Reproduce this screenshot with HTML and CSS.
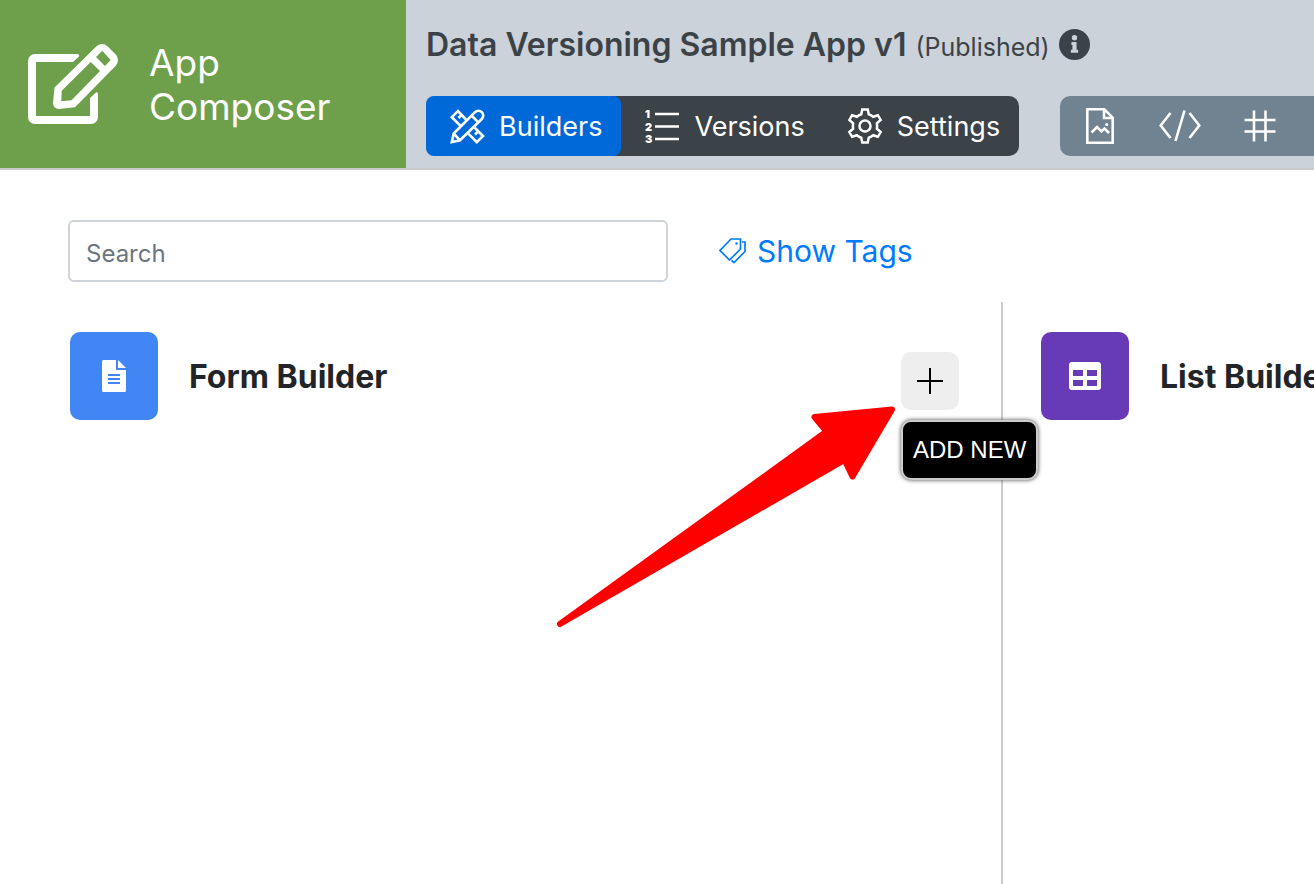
FILE: index.html
```html
<!DOCTYPE html>
<html lang="en">
<head>
  <meta charset="utf-8">
  <title>App Composer</title>
  <link rel="stylesheet" href="styles.css">
</head>
<body>
  <header class="header">
    <div class="brand">
      <svg class="brand-icon" viewBox="0 0 90 80" fill="#fff" fill-rule="evenodd">
        <path d="M50 10H7a7 7 0 0 0-7 7v56a7 7 0 0 0 7 7h56a7 7 0 0 0 7-7V49.500q-1-2-2.500-.500L62 54v18H8V18h37l6-5.500q1-1.500-1-2.500z"/>
        <path d="M26.500 43.500L68.500 2.200q5.500-4.400 11 0L88 10.800q4 5.200 0 10.700L47 63.300L31 65q-6-.500-6-6zM33.700 46.700L33.300 57.300L43.500 56.300L72 27L62.700 18zM68 13L74.300 6.700L82.700 16L77 22z"/>
      </svg>
      <div class="brand-name">App<br>Composer</div>
    </div>
    <div class="header-main">
      <h1 class="app-title">Data Versioning Sample App v1
        <small>(Published)</small>
        <svg class="info-icon" viewBox="0 0 30 30">
          <circle cx="15" cy="15" r="15" fill="#3b4248"/>
          <circle cx="15" cy="8.500" r="2.600" fill="#cbd2d9"/>
          <path d="M12 12.500h5v7.500h1.500v3h-7v-3H13v-4.500h-1z" fill="#cbd2d9"/>
        </svg>
      </h1>
      <div class="toolbars">
        <nav class="nav">
          <button class="nav-btn active" type="button">
            <svg class="nav-icon" viewBox="0 0 36 36" fill="none" stroke="#fff" stroke-width="2.600">
              <path d="M2.800 34L4.700 25.500L26 4.200a4.700 4.700 0 0 1 6.800 6.800L11 32.300zM22.500 7.500l6.800 6.800M4.700 25.500l6.300 6.800"/>
              <path d="M17 11.500L9 3L2.800 9.200L11.300 17.700M25.500 19.500l8.500 8.500-6.200 6.200-8.500-8.500M12.500 7l-3 3M29 23.500l-3 3"/>
            </svg>
            Builders
          </button>
          <button class="nav-btn" type="button">
            <svg class="nav-icon" viewBox="0 0 36 36" fill="#fff">
              <path d="M11 6h24M11 18.500h24M11 31h24" stroke="#fff" stroke-width="2.600"/>
              <text x="1" y="10">1</text>
              <text x="1" y="23">2</text>
              <text x="1" y="35">3</text>
            </svg>
            Versions
          </button>
          <button class="nav-btn" type="button">
            <svg class="nav-icon" viewBox="3 3 26 26" fill="none" stroke="#fff" stroke-width="1.800">
              <path d="M14 4h4l.7 3.500c1.200.4 2.300 1 3.200 1.800l3.400-1.100 2 3.400-2.700 2.400c.2 1.300.2 2.700 0 4l2.700 2.400-2 3.400-3.400-1.100c-.9.8-2 1.400-3.200 1.800L18 28h-4l-.7-3.500c-1.200-.4-2.300-1-3.200-1.800l-3.400 1.100-2-3.400 2.700-2.400c-.2-1.300-.2-2.700 0-4L4.700 11.600l2-3.400 3.400 1.100c.9-.8 2-1.400 3.200-1.800z"/>
              <circle cx="16" cy="16" r="4"/>
            </svg>
            Settings
          </button>
        </nav>
        <nav class="tools">
          <button class="tool-btn" type="button" aria-label="Resources">
            <svg width="28" height="36" viewBox="0 0 28 36" fill="none" stroke="#fff" stroke-width="2.600">
              <path d="M1.300 1.300h17l8.400 8.400v25H1.300zM18 1.500V10h8.500"/>
              <path d="M5.500 24.500l5.500-5.500 4.500 4.500 3-3 4.500 4.500"/>
              <circle cx="20.700" cy="16.500" r="1.500" fill="#fff" stroke="none"/>
            </svg>
          </button>
          <button class="tool-btn" type="button" aria-label="Code">
            <svg width="42" height="32" viewBox="0 0 42 32" fill="none" stroke="#fff" stroke-width="2.600">
              <path d="M11.500 3L1.700 15.500L11.500 28M30.500 3l9.800 12.500L30.500 28M25.500.5l-9 30.500"/>
            </svg>
          </button>
          <button class="tool-btn" type="button" aria-label="Variables">
            <svg width="32" height="32" viewBox="0 0 32 32" fill="none" stroke="#fff" stroke-width="2.600">
              <path d="M10 .5v31M21.500.5v31M.5 10h31M.5 21.500h31"/>
            </svg>
          </button>
        </nav>
      </div>
    </div>
  </header>

  <main>
    <div class="filters">
      <input class="search" type="text" placeholder="Search" aria-label="Search">
      <a class="show-tags" href="#">
        <svg width="27" height="26" viewBox="0 0 27 26" fill="none" stroke="#007bff" stroke-width="1.700">
          <path d="M12 1h9.500v10L10.500 22L1 12.500z"/>
          <path d="M23 4h3v9.500L15 24.500l-2.500-2.200"/>
          <circle cx="17.500" cy="5.500" r="1.200" fill="#007bff" stroke="none"/>
        </svg>
        Show Tags
      </a>
    </div>

    <div class="builders">
      <section class="builder">
        <div class="builder-icon form">
          <svg width="24" height="32" viewBox="0 0 24 32">
            <path d="M1.500 0H14v10h10v20.500a1.500 1.500 0 0 1-1.500 1.500h-21A1.500 1.500 0 0 1 0 30.500v-29A1.500 1.500 0 0 1 1.500 0zM16 0l8 8h-8z" fill="#fff"/>
            <path d="M6 15h12M6 19h12M6 23h12" stroke="#4285f4" stroke-width="2"/>
          </svg>
        </div>
        <h2 class="builder-title">Form Builder</h2>
        <div class="add-new">
          <button class="add-btn" type="button" aria-label="Add new">
            <svg width="28" height="28" viewBox="0 0 28 28">
              <path d="M14 1v26M1 14h26" stroke="#000" stroke-width="2"/>
            </svg>
          </button>
          <span class="tooltip">ADD NEW</span>
        </div>
      </section>
      <section class="builder">
        <div class="builder-icon list">
          <svg width="32" height="28" viewBox="0 0 32 28">
            <rect width="32" height="28" rx="3" fill="#fff"/>
            <path d="M4 8h10v6H4zM18 8h10v6H18zM4 18h10v6H4zM18 18h10v6H18z" fill="#673ab7"/>
          </svg>
        </div>
        <h2 class="builder-title">List Builder</h2>
      </section>
    </div>
  </main>

  <svg class="arrow" width="340" height="224" viewBox="0 0 340 224">
    <path d="M3 218L269.500 25.500L257.500 11L335 3.500L295.500 70.500L287.500 54z" fill="#f00" stroke="#f00" stroke-width="6" stroke-linejoin="round"/>
  </svg>
</body>
</html>
```

FILE: styles.css
```css
* {
  box-sizing: border-box;
}

body {
  margin: 0;
  min-height: 100vh;
  display: flex;
  flex-direction: column;
  background: #fff;
  color: #212529;
  font-family: Inter, "Liberation Sans", sans-serif;
}

button {
  border: 0;
  padding: 0;
  background: none;
  font-family: inherit;
  cursor: pointer;
}

svg {
  flex-shrink: 0;
}

/* header */
.header {
  display: flex;
  height: 170px;
  border-bottom: 2px solid #ccc;
  background: #cbd2d9;
}

.brand {
  display: flex;
  flex-shrink: 0;
  align-items: center;
  gap: 31px;
  width: 406px;
  padding-left: 28px;
  background: #6ea04c;
  color: #fff;
}

.brand-icon {
  width: 90px;
  height: 80px;
}

.brand-name {
  padding-top: 2px;
  font-size: 37px;
  line-height: 44px;
}

.header-main {
  flex: 1;
  min-width: 0;
  padding: 20px 0 0 20px;
  color: #3b4248;
}

.app-title {
  display: flex;
  align-items: baseline;
  gap: 9px;
  height: 48px;
  margin: 0;
  font-size: 32px;
  font-weight: 600;
  line-height: 50px;
  white-space: nowrap;
}

.app-title small {
  font-size: 25px;
  font-weight: 400;
}

.info-icon {
  align-self: center;
  width: 31px;
  height: 31px;
}

.toolbars {
  display: flex;
  gap: 41px;
  margin-top: 28px;
}

.nav {
  display: flex;
  flex-shrink: 0;
  border-radius: 10px;
  background: #3b4248;
}

.nav-btn {
  display: flex;
  align-items: center;
  gap: 14px;
  height: 60px;
  padding: 0 19px 0 23px;
  border-radius: 8px;
  color: #fff;
  font-size: 27px;
  white-space: nowrap;
}

.nav-btn.active {
  background: #0069d9;
}

.nav-icon {
  width: 36px;
  height: 36px;
  overflow: visible;
}

.nav-icon text {
  font-size: 11px;
  font-weight: 900;
}

.tools {
  display: flex;
  flex: 1;
  border-radius: 10px 0 0 10px;
  background: #718391;
}

.tool-btn {
  display: flex;
  flex: 0 0 80px;
  align-items: center;
  justify-content: center;
}

/* search row */
main {
  display: flex;
  flex: 1;
  flex-direction: column;
  padding: 50px 0 0 32px;
}

.filters {
  display: flex;
  align-items: center;
  gap: 51px;
  padding-left: 36px;
}

.search {
  width: 600px;
  height: 62px;
  padding: 4px 16px 0;
  border: 2px solid #ced4da;
  border-radius: 6px;
  font-family: inherit;
  font-size: 24px;
}

.search::placeholder {
  color: #6c757d;
  opacity: 1;
}

.show-tags {
  display: flex;
  align-items: center;
  gap: 11px;
  color: #007bff;
  font-size: 30px;
  text-decoration: none;
}

/* builder columns */
.builders {
  display: flex;
  flex: 1;
  margin-top: 20px;
  overflow: hidden;
}

.builder {
  display: flex;
  flex: 0 0 971px;
  align-items: flex-start;
  gap: 31px;
  padding: 30px 42px 0 38px;
  border-right: 2px solid #ccc;
}

.builder-icon {
  display: flex;
  align-items: center;
  justify-content: center;
  width: 88px;
  height: 88px;
  border-radius: 10px;
}

.builder-icon.form {
  background: #4285f4;
}

.builder-icon.list {
  background: #673ab7;
}

.builder-title {
  flex: 1;
  margin: 0;
  font-size: 32px;
  line-height: 90px;
  white-space: nowrap;
}

.add-new {
  position: relative;
  margin-top: 20px;
}

.add-btn {
  display: flex;
  align-items: center;
  justify-content: center;
  width: 58px;
  height: 58px;
  border-radius: 10px;
  background: #eee;
}

.tooltip {
  position: absolute;
  top: 68px;
  left: 0;
  padding: 0 10px;
  border: 2px solid #ccc;
  border-radius: 10px;
  background: #000;
  box-shadow: 0 0 4px #444;
  color: #fff;
  font-family: "Liberation Sans", Arial, sans-serif;
  font-size: 24px;
  line-height: 56px;
  white-space: nowrap;
}

/* pointer drawn over the page */
.arrow {
  position: absolute;
  top: 406px;
  left: 557px;
  pointer-events: none;
}
```
